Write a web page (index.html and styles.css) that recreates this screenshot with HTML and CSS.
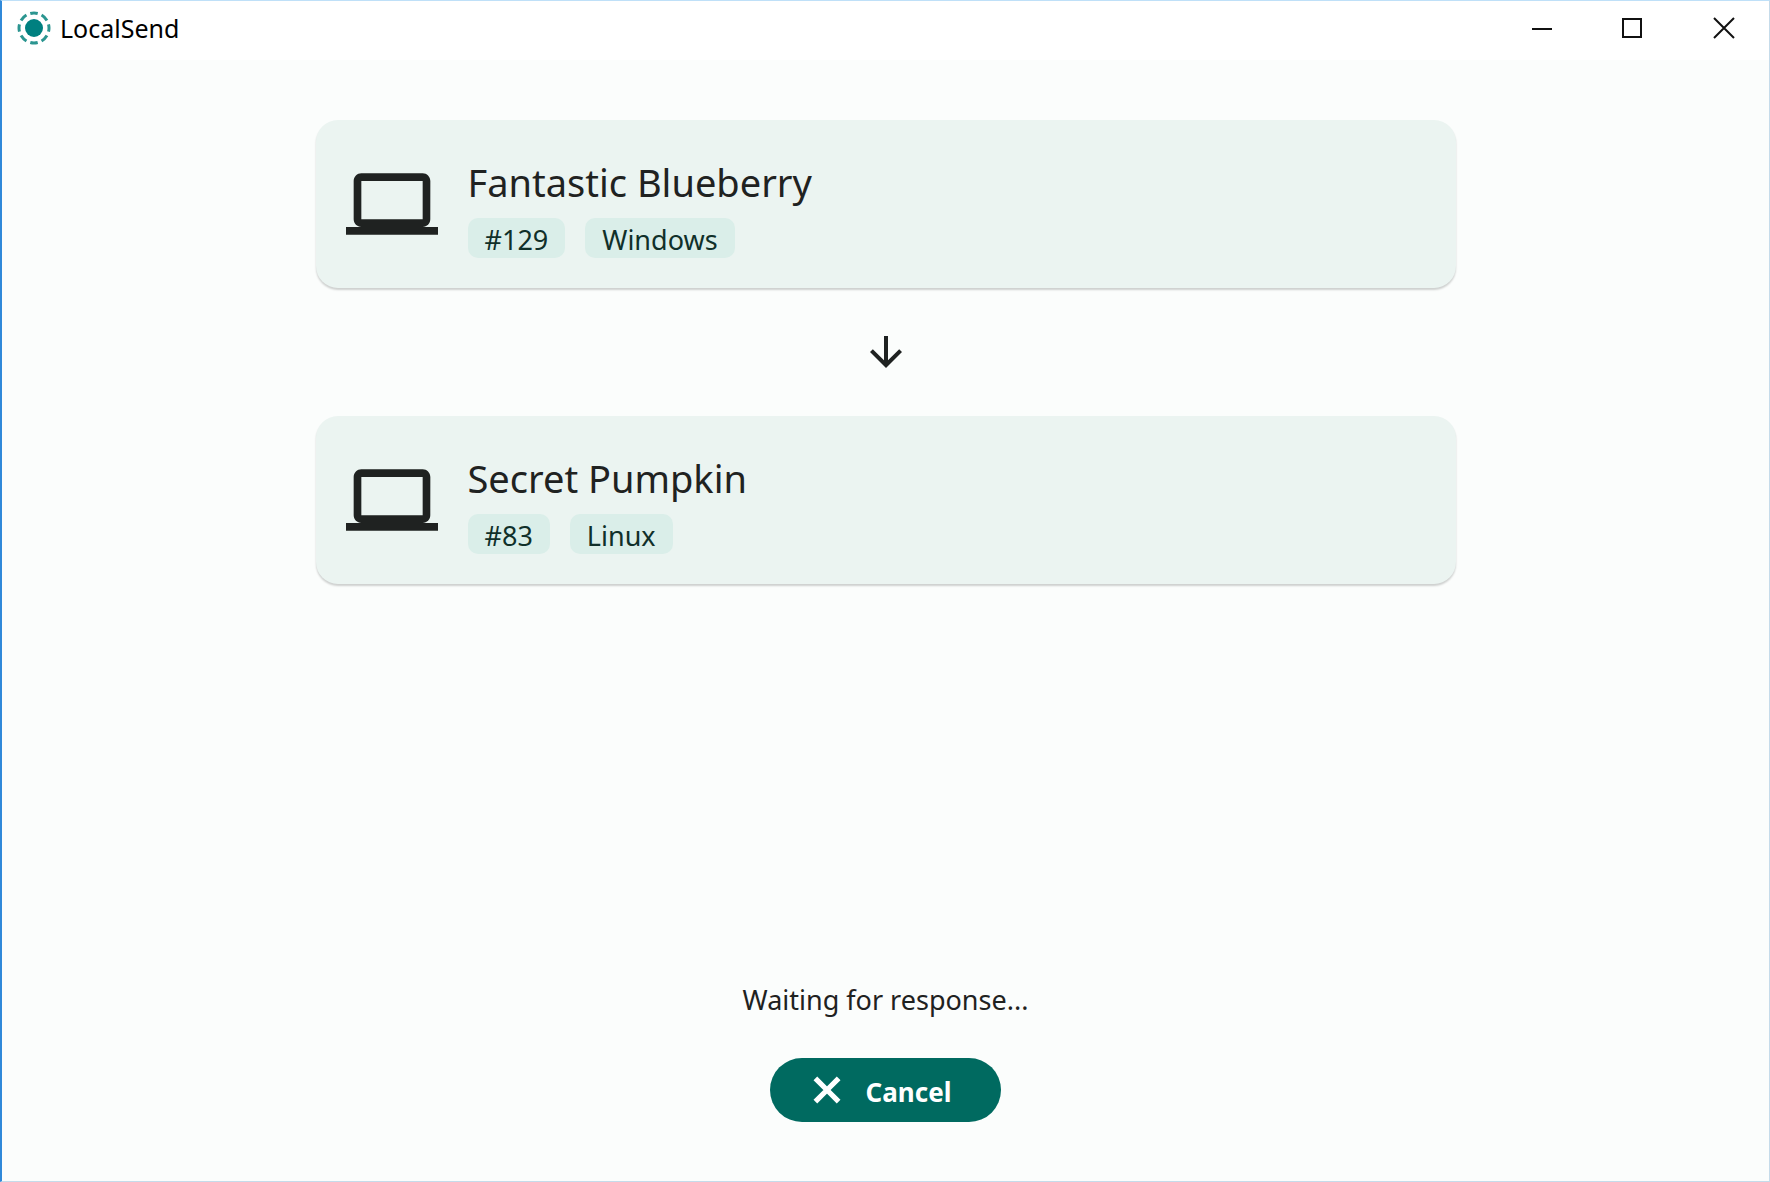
FILE: index.html
```html
<!DOCTYPE html>
<html lang="en">
<head>
<meta charset="utf-8">
<title>LocalSend</title>
<link rel="stylesheet" href="styles.css">
</head>
<body>
<div class="window">
  <header class="titlebar">
    <svg class="logo" viewBox="0 0 34 34" aria-hidden="true">
      <circle cx="17" cy="17" r="9" fill="#008080"/>
      <circle cx="17" cy="17" r="15" fill="none" stroke="#2b9590" stroke-width="3" pathLength="80" stroke-dasharray="6.500 3.500" stroke-dashoffset="3.250"/>
    </svg>
    <h1 class="app-name">LocalSend</h1>
    <div class="controls">
      <button class="control" type="button" aria-label="Minimize"><svg viewBox="0 0 22 22"><path d="M1 12h20"/></svg></button>
      <button class="control" type="button" aria-label="Maximize"><svg viewBox="0 0 22 22"><path d="M1 2h18v18H1z"/></svg></button>
      <button class="control" type="button" aria-label="Close"><svg viewBox="0 0 22 22"><path d="M1 1l20 20M21 1L1 21"/></svg></button>
    </div>
  </header>
  <main class="content">
    <section class="card">
      <svg class="device" viewBox="0 0 24 24" aria-hidden="true"><path d="M20 18c1.1 0 1.99-.9 1.99-2L22 6c0-1.100-.9-2-2-2H4c-1.100 0-2 .9-2 2v10c0 1.100.9 2 2 2H0v2h24v-2h-4zM4 6h16v10H4V6z"/></svg>
      <div class="info">
        <h2 class="name">Fantastic Blueberry</h2>
        <div class="chips"><span class="chip">#129</span><span class="chip">Windows</span></div>
      </div>
    </section>
    <svg class="arrow" viewBox="0 0 24 24" aria-hidden="true"><path d="M20 12l-1.410-1.410L13 16.170V4h-2v12.170l-5.580-5.590L4 12l8 8 8-8z"/></svg>
    <section class="card">
      <svg class="device" viewBox="0 0 24 24" aria-hidden="true"><path d="M20 18c1.1 0 1.99-.9 1.99-2L22 6c0-1.100-.9-2-2-2H4c-1.100 0-2 .9-2 2v10c0 1.100.9 2 2 2H0v2h24v-2h-4zM4 6h16v10H4V6z"/></svg>
      <div class="info">
        <h2 class="name">Secret Pumpkin</h2>
        <div class="chips"><span class="chip">#83</span><span class="chip">Linux</span></div>
      </div>
    </section>
    <footer class="status">
      <p class="message">Waiting for response...</p>
      <button class="cancel" type="button">
        <svg viewBox="0 0 24 24" aria-hidden="true"><path d="M19 6.410L17.590 5 12 10.590 6.410 5 5 6.410 10.590 12 5 17.590 6.410 19 12 13.410 17.590 19 19 17.590 13.410 12z"/></svg>
        <span class="cancel-label">Cancel</span>
      </button>
    </footer>
  </main>
</div>
</body>
</html>
```
FILE: styles.css
```css
* { box-sizing: border-box; }

body {
  margin: 0;
  font-family: "Noto Sans", "Open Sans", sans-serif;
  color: #1f2221;
}

h1, h2, p { margin: 0; font-weight: 400; }

svg { display: block; flex: none; }

.window {
  display: flex;
  flex-direction: column;
  min-height: 100vh;
  background: #fbfdfc;
  border: 1px solid #c5dbea;
  border-top-color: #bfe0f8;
  border-left: 2px solid #3089d9;
}

.titlebar {
  display: flex;
  align-items: center;
  height: 59px;
  padding-left: 15px;
  padding-bottom: 6px;
  background: #fff;
}

.logo { width: 34px; height: 34px; }

.app-name {
  margin-left: 9px;
  font-size: 25px;
  line-height: 36px;
  color: #000;
}

.controls { display: flex; margin-left: auto; }

.control {
  display: grid;
  place-items: center;
  width: 91px;
  height: 52px;
  padding: 0;
  border: 0;
  background: none;
}

.control svg {
  width: 22px;
  height: 22px;
  fill: none;
  stroke: #111;
  stroke-width: 2;
}

.content {
  display: flex;
  flex: 1;
  flex-direction: column;
  align-items: center;
  padding: 60px 30px 59px;
}

.card {
  display: flex;
  align-items: center;
  gap: 30px;
  width: 100%;
  max-width: 1140px;
  padding: 30px;
  border-radius: 22px;
  background: #ebf4f1;
  box-shadow: 0 2px 2px rgba(0, 0, 0, 0.18);
}

.device { width: 92px; height: 92px; fill: #1f2221; }

.name { font-size: 38px; line-height: 64px; }

.chips { display: flex; gap: 20px; margin-top: 4px; }

.chip {
  padding: 4px 17px 0;
  border-radius: 10px;
  background: #daeee9;
  color: #10302a;
  font-size: 27px;
  line-height: 36px;
}

.arrow { width: 48px; height: 48px; margin: 40px 0; fill: #1f2221; }

.status {
  display: flex;
  flex-direction: column;
  align-items: center;
  gap: 38px;
  margin-top: auto;
}

.message { font-size: 27px; line-height: 40px; }

.cancel {
  display: flex;
  align-items: center;
  gap: 18px;
  height: 64px;
  padding: 0 50px 0 36px;
  border: 0;
  border-radius: 32px;
  background: #006a60;
  color: #fff;
  font: 700 26px/36px "Noto Sans", "Open Sans", sans-serif;
}

.cancel svg { width: 42px; height: 42px; fill: #fff; stroke: #fff; stroke-width: 1px; }

.cancel-label { padding-top: 4px; }
```
